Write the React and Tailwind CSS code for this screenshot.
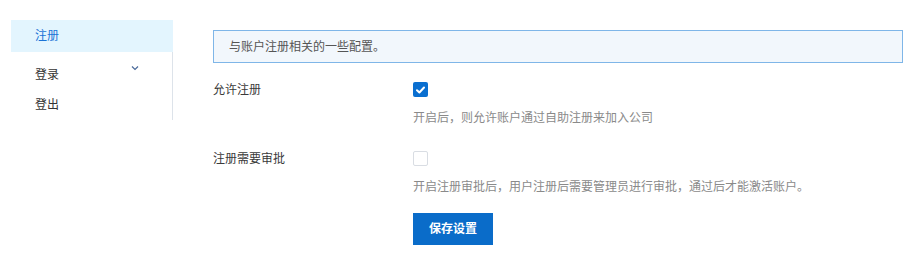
import { useState } from "react";

const font = { fontFamily: '"Liberation Sans", "Noto Sans CJK SC", sans-serif' };

const Checkbox = ({ checked, onChange }) => (
    <button
        onClick={onChange}
        className={`w-[15px] h-[15px] rounded-[2px] flex items-center justify-center ${checked ? "bg-[#0a6fd0]" : "bg-white border border-[#d9dde3]"}`}
    >
        {checked && (
            <svg width="9" height="8" viewBox="0 0 9 8">
                <path d="M1 4.2 L3.4 6.5 L8 1.5" fill="none" stroke="white" strokeWidth="2" strokeLinecap="round" strokeLinejoin="round" />
            </svg>
        )}
    </button>
);

const SettingRow = ({ label, checked, onToggle, desc, className }) => (
    <div className={className}>
        <div className="flex items-start">
            <div className="w-[200px] text-[12px] leading-[15px] pt-[1px] text-[#3a3a3a]">{label}</div>
            <Checkbox checked={checked} onChange={onToggle} />
        </div>
        <div className="ml-[200px] mt-[11px] pt-[1px] text-[12px] leading-[16px] text-[#8a8a8a]">{desc}</div>
    </div>
);

const App = () => {
    const [allowSignup, setAllowSignup] = useState(true);
    const [needApprove, setNeedApprove] = useState(false);

    return (
        <div className="flex items-start bg-white min-h-[271px]" style={font}>
            <div className="w-[162px] ml-[11px] mt-[20px] text-[12px]">
                <div className="h-[32px] bg-[#e3f5fe] pl-[24px] flex items-center text-[#1a73d6]">注册</div>
                <div className="border-r border-[#dde3ea] pt-[11px] pb-[3px] flex flex-col gap-[6px] text-[#333]">
                    <div className="h-[24px] pl-[24px] pr-[33px] flex items-center justify-between">
                        <span>登录</span>
                        <svg width="8" height="6" viewBox="0 0 8 6" className="-mt-[14px]">
                            <path d="M1 1.5 L4 4.5 L7 1.5" fill="none" stroke="#4a6a9a" strokeWidth="1.2" />
                        </svg>
                    </div>
                    <div className="h-[24px] pl-[24px] flex items-center">登出</div>
                </div>
            </div>

            <div className="ml-[40px] mt-[30px] w-[690px]">
                <div className="h-[33px] border border-[#7fb6e8] bg-[#f2f7fc] pl-[15px] pt-[1px] flex items-center text-[12px] text-[#555]">
                    与账户注册相关的一些配置。
                </div>

                <SettingRow
                    className="mt-[19px]"
                    label="允许注册"
                    checked={allowSignup}
                    onToggle={() => setAllowSignup(!allowSignup)}
                    desc="开启后，则允许账户通过自助注册来加入公司"
                />

                <SettingRow
                    className="mt-[25px]"
                    label="注册需要审批"
                    checked={needApprove}
                    onToggle={() => setNeedApprove(!needApprove)}
                    desc="开启注册审批后，用户注册后需要管理员进行审批，通过后才能激活账户。"
                />

                <div className="ml-[200px] mt-[18px]">
                    <button className="w-[80px] h-[32px] bg-[#0a6cc9] text-white text-[12px] font-bold">保存设置</button>
                </div>
            </div>
        </div>
    );
};

export default App;
